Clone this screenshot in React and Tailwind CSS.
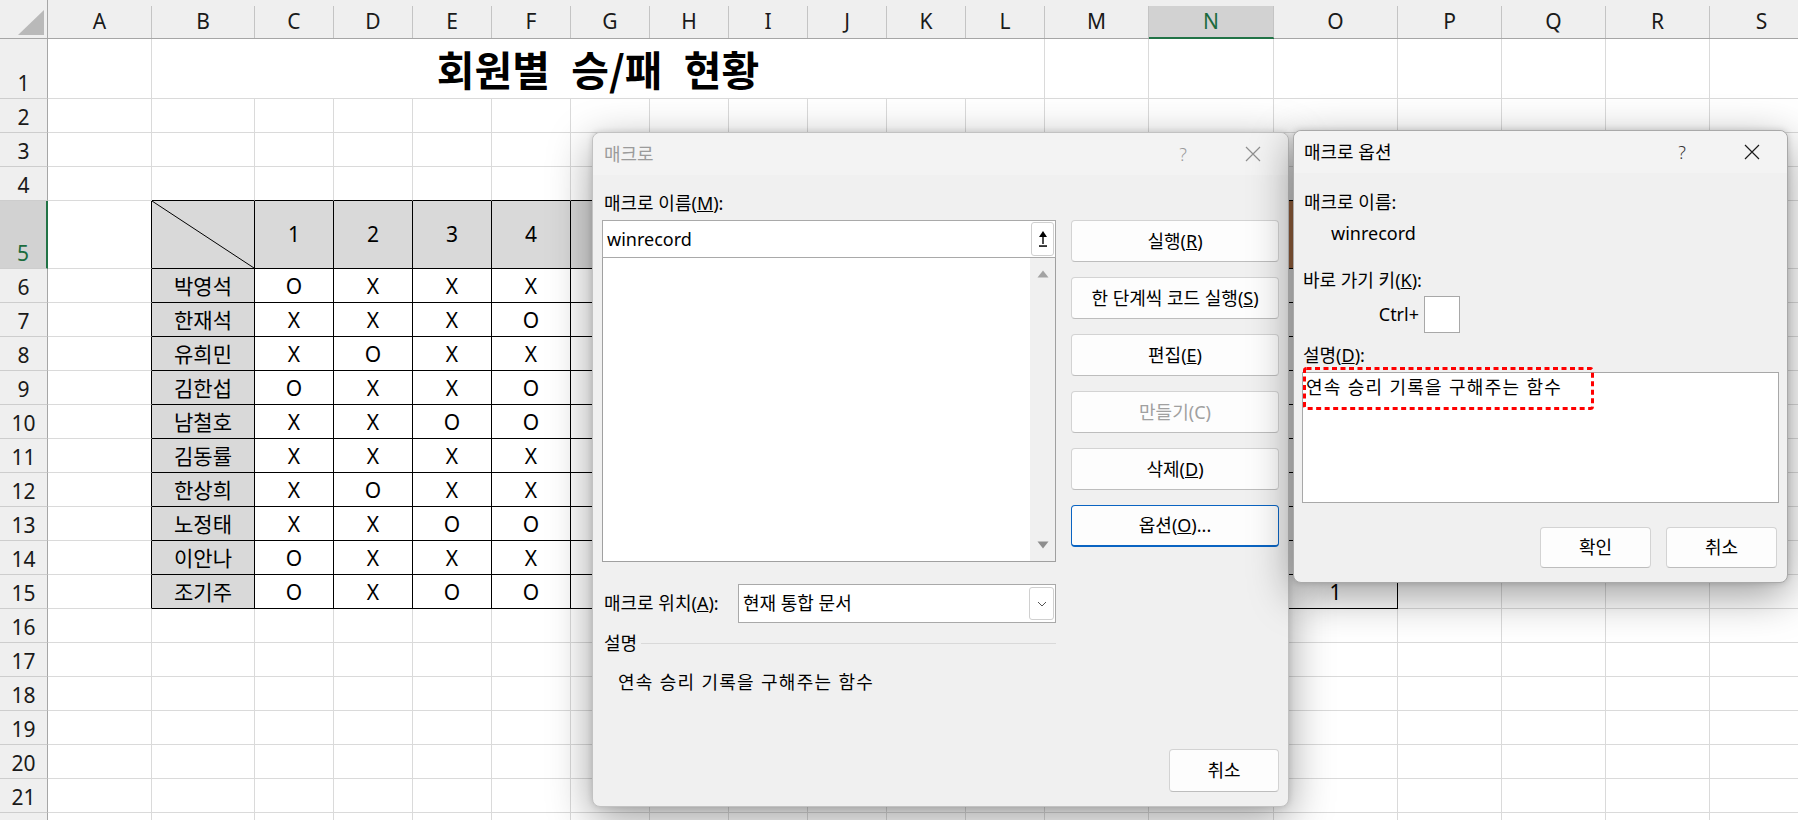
import React from 'react';

const COLS = ['A','B','C','D','E','F','G','H','I','J','K','L','M','N','O','P','Q','R','S'];
const NAMES = ['박영석','한재석','유희민','김한섭','남철호','김동률','한상희','노정태','이안나','조기주'];
const RES = [
  'OXXX',
  'XXXO',
  'XOXX',
  'OXXO',
  'XXOO',
  'XXXX',
  'XOXX',
  'XXOO',
  'OXXX',
  'OXOO',
];

function inTable(r, c) {
  if (r >= 5 && r <= 15 && c >= 1 && c <= 12) return true;
  if (r >= 5 && r <= 15 && c === 14) return true;
  return false;
}

// Only the cells that are not hidden behind the dialogs carry text.
function cellContent(r, c) {
  if (r === 5 && c >= 2 && c <= 5) return String(c - 1);
  if (r >= 6 && r <= 15) {
    if (c === 1) return NAMES[r - 6];
    if (c >= 2 && c <= 5) return RES[r - 6][c - 2];
  }
  if (r === 15 && c === 14) return '1';
  return '';
}

function Sheet() {
  const cells = [];
  cells.push(
    <div key="corner" className="relative bg-[#efefef] border-r border-b border-r-[#a6a6a6] border-b-[#a6a6a6]">
      <svg className="absolute left-0 top-0" width="48" height="39" viewBox="0 0 48 39">
        <polygon points="44,10 44,35 18,35" fill="#b9b9b9" />
      </svg>
    </div>
  );
  COLS.forEach((L) => {
    const sel = L === 'N';
    cells.push(
      <div key={'h' + L} className={`flex flex-col bg-[#efefef] border-b ${sel ? 'border-b-[#217346]' : 'border-b-[#a6a6a6]'}`}>
        <div className="h-[6px]" />
        <div className={`flex-1 flex items-center justify-center border-r border-r-[#c4c4c4] ${sel ? 'bg-[#d2d2d2] text-[#1b6b3e] border-b border-b-[#217346]' : 'text-[#1a1a1a]'}`}>{L}</div>
      </div>
    );
  });
  for (let r = 1; r <= 22; r++) {
    const selRow = r === 5;
    cells.push(
      <div key={'r' + r} className={`flex items-end justify-center leading-[30px] border-b border-b-[#cdcdcd] ${selRow ? 'bg-[#d2d2d2] text-[#1b6b3e] border-r-2 border-r-[#217346]' : 'bg-[#efefef] text-[#1a1a1a] border-r border-r-[#a6a6a6]'}`}>{r <= 21 ? r : ''}</div>
    );
    if (r === 1) {
      cells.push(<div key="c1-0" className="border-r border-b border-r-[#dadada] border-b-[#dadada]" />);
      cells.push(
        <div key="title" className="col-span-11 flex items-center justify-center border-r border-b border-r-[#dadada] border-b-[#dadada] font-[family-name:Noto_Sans_CJK_KR,sans-serif] font-bold text-[41px] [word-spacing:12px] text-black">
          회원별 승/패 현황
        </div>
      );
      for (let c = 12; c <= 18; c++) {
        cells.push(<div key={'c1-' + c} className="border-r border-b border-r-[#dadada] border-b-[#dadada]" />);
      }
      continue;
    }
    for (let c = 0; c <= 18; c++) {
      const rb = inTable(r, c) || inTable(r, c + 1) ? 'border-r-black' : 'border-r-[#dadada]';
      const bb = inTable(r, c) || inTable(r + 1, c) ? 'border-b-black' : 'border-b-[#dadada]';
      let bg = 'bg-white';
      if ((r === 5 && c >= 1 && c <= 12) || (r >= 6 && r <= 15 && c === 1)) bg = 'bg-[#d9d9d9]';
      if (r === 5 && c === 14) bg = 'bg-[#b8784d]';
      const content = cellContent(r, c);
      cells.push(
        <div key={'c' + r + '-' + c} className={`relative flex items-center justify-center border-r border-b ${rb} ${bb} ${bg} ${r === 5 ? '' : 'pt-[3px]'}`}>
          {r === 5 && c === 1 ? (
            <svg className="absolute inset-0 w-full h-full" viewBox="0 0 100 100" preserveAspectRatio="none">
              <line x1="0" y1="0" x2="100" y2="100" stroke="black" strokeWidth="1" vectorEffect="non-scaling-stroke" />
            </svg>
          ) : null}
          {content}
        </div>
      );
    }
  }
  return (
    <div className="grid grid-cols-[48px_104px_103px_repeat(10,79px)_104px_125px_124px_repeat(4,104px)] grid-rows-[39px_60px_34px_34px_34px_68px_repeat(17,34px)] text-[21px] text-black font-[family-name:Noto_Sans,Noto_Sans_CJK_KR,sans-serif]">
      {cells}
    </div>
  );
}

function CloseIcon({ color }) {
  return (
    <svg width="16" height="16" viewBox="0 0 16 16">
      <path d="M1 1 L15 15 M15 1 L1 15" stroke={color} strokeWidth="1.2" fill="none" />
    </svg>
  );
}

function Btn({ children, className = '', disabled = false, focused = false }) {
  return (
    <div
      className={`flex items-center justify-center rounded-[4px] bg-[#fdfdfd] ${focused ? 'border border-[#0a64c2] border-b-2' : 'border border-[#d3d3d3] border-b-[#bdbdbd]'} ${disabled ? 'text-[#a0a0a0]' : 'text-black'} ${className}`}
    >
      {children}
    </div>
  );
}

function MacroDialog() {
  return (
    <div className="absolute left-[592px] top-[132px] w-[697px] h-[675px] flex flex-col rounded-[8px] border border-[#c2c2c2] bg-[#f0f0f0] shadow-[0_12px_44px_rgba(0,0,0,0.38),0_0_6px_rgba(0,0,0,0.14)] text-[18px] text-black font-[family-name:Noto_Sans,Noto_Sans_CJK_KR,sans-serif]">
      <div className="h-[42px] shrink-0 flex items-center rounded-t-[8px] bg-[#f3f3f3]">
        <span className="flex-1 pl-[11px] text-[#9b9b9b]">매크로</span>
        <div className="w-[70px] flex justify-center text-[#9b9b9b] font-light">?</div>
        <div className="w-[70px] flex justify-center"><CloseIcon color="#8f8f8f" /></div>
      </div>
      <div className="flex-1 flex flex-col px-[9px] pt-[17px] pb-[14px]">
        <div className="flex items-start">
          <div className="w-[454px] flex flex-col">
            <div className="h-[22px] leading-[22px] pl-[2px]">매크로 이름(<span className="underline">M</span>):</div>
            <div className="mt-[6px] h-[38px] flex items-center border border-[#a9a9a9] bg-white pr-[1px]">
              <span className="flex-1 pl-[4px]">winrecord</span>
              <div className="w-[23px] h-[34px] flex items-center justify-center rounded-[3px] border border-[#cfcfcf] bg-white">
                <svg width="10" height="18" viewBox="0 0 10 18">
                  <path d="M5 1 L1 7 H9 Z" fill="#000" />
                  <rect x="4.3" y="6" width="1.4" height="8" fill="#000" />
                  <rect x="1" y="15.3" width="8" height="1.5" fill="#000" />
                </svg>
              </div>
            </div>
            <div className="h-[304px] flex justify-end border border-t-0 border-[#a0a0a0] bg-white">
              <div className="w-[25px] flex flex-col items-center justify-between bg-[#f0f0f0] py-[12px]">
                <svg width="12" height="8" viewBox="0 0 12 8"><path d="M6 0.5 L11.5 7.5 H0.5 Z" fill="#a3a3a3" /></svg>
                <svg width="12" height="8" viewBox="0 0 12 8"><path d="M0.5 0.5 H11.5 L6 7.5 Z" fill="#8e8e8e" /></svg>
              </div>
            </div>
          </div>
          <div className="ml-[15px] mt-[28px] w-[208px] flex flex-col gap-[15px]">
            <Btn className="h-[42px]">실행(<span className="underline">R</span>)</Btn>
            <Btn className="h-[42px]">한 단계씩 코드 실행(<span className="underline">S</span>)</Btn>
            <Btn className="h-[42px]">편집(<span className="underline">E</span>)</Btn>
            <Btn className="h-[42px]" disabled>만들기(C)</Btn>
            <Btn className="h-[42px]">삭제(<span className="underline">D</span>)</Btn>
            <Btn className="h-[42px]" focused>옵션(<span className="underline">O</span>)...</Btn>
          </div>
        </div>
        <div className="mt-[22px] h-[39px] w-[454px] flex items-center">
          <div className="w-[136px] pl-[2px]">매크로 위치(<span className="underline">A</span>):</div>
          <div className="flex-1 h-full flex items-center border border-[#a9a9a9] bg-white pr-[1px]">
            <span className="flex-1 pl-[4px]">현재 통합 문서</span>
            <div className="w-[25px] h-[33px] flex items-center justify-center rounded-[3px] border border-[#d0d0d0] bg-white">
              <svg width="10" height="6" viewBox="0 0 10 6"><path d="M1 1 L5 5 L9 1" stroke="#555" strokeWidth="1" fill="none" /></svg>
            </div>
          </div>
        </div>
        <div className="mt-[9px] h-[22px] w-[454px] flex items-center">
          <span className="pl-[2px] leading-[22px]">설명</span>
          <div className="flex-1 ml-[4px] h-px bg-[#d9d9d9]" />
        </div>
        <div className="mt-[17px] h-[22px] leading-[22px] pl-[16px] tracking-[1.3px]">연속 승리 기록을 구해주는 함수</div>
        <div className="mt-auto flex justify-end">
          <Btn className="w-[110px] h-[43px]">취소</Btn>
        </div>
      </div>
    </div>
  );
}

function OptionsDialog() {
  return (
    <div className="absolute left-[1293px] top-[130px] w-[495px] h-[453px] flex flex-col rounded-[8px] border border-[#a9a9a9] bg-[#f0f0f0] shadow-[0_12px_44px_rgba(0,0,0,0.4),0_0_6px_rgba(0,0,0,0.16)] text-[18px] text-black font-[family-name:Noto_Sans,Noto_Sans_CJK_KR,sans-serif]">
      <div className="h-[42px] shrink-0 flex items-center rounded-t-[8px] bg-[#f3f3f3]">
        <span className="flex-1 pl-[10px]">매크로 옵션</span>
        <div className="w-[70px] flex justify-center text-[#333] font-light">?</div>
        <div className="w-[70px] flex justify-center"><CloseIcon color="#1a1a1a" /></div>
      </div>
      <div className="flex flex-col px-[8px] pt-[18px]">
        <div className="h-[22px] leading-[22px] pl-[2px]">매크로 이름:</div>
        <div className="mt-[9px] h-[22px] leading-[22px] pl-[29px]">winrecord</div>
        <div className="mt-[25px] h-[22px] leading-[22px] pl-[1px]">바로 가기 키(<span className="underline">K</span>):</div>
        <div className="mt-[5px] h-[37px] flex items-center">
          <span className="w-[122px] text-right pr-[5px]">Ctrl+</span>
          <div className="w-[36px] h-[37px] border border-[#a8a8a8] bg-white" />
        </div>
        <div className="mt-[11px] h-[22px] leading-[22px] pl-[1px]">설명(<span className="underline">D</span>):</div>
        <div className="mt-[6px] h-[131px] border border-[#a8a8a8] bg-white pl-[3px] pt-[3px] leading-[22px] tracking-[1.3px]">연속 승리 기록을 구해주는 함수</div>
        <div className="mt-[24px] flex justify-end gap-[15px] pr-[2px]">
          <Btn className="w-[111px] h-[41px]">확인</Btn>
          <Btn className="w-[111px] h-[41px]">취소</Btn>
        </div>
      </div>
      <svg className="absolute left-[9px] top-[236px]" width="291" height="43" viewBox="0 0 291 43">
        <rect x="1.5" y="1.5" width="288" height="40" rx="2" fill="none" stroke="#ff0000" strokeWidth="3" strokeDasharray="5 3.5" />
      </svg>
    </div>
  );
}

export default function App() {
  return (
    <div className="relative w-[1798px] h-[820px] overflow-hidden bg-white">
      <Sheet />
      <MacroDialog />
      <OptionsDialog />
    </div>
  );
}
